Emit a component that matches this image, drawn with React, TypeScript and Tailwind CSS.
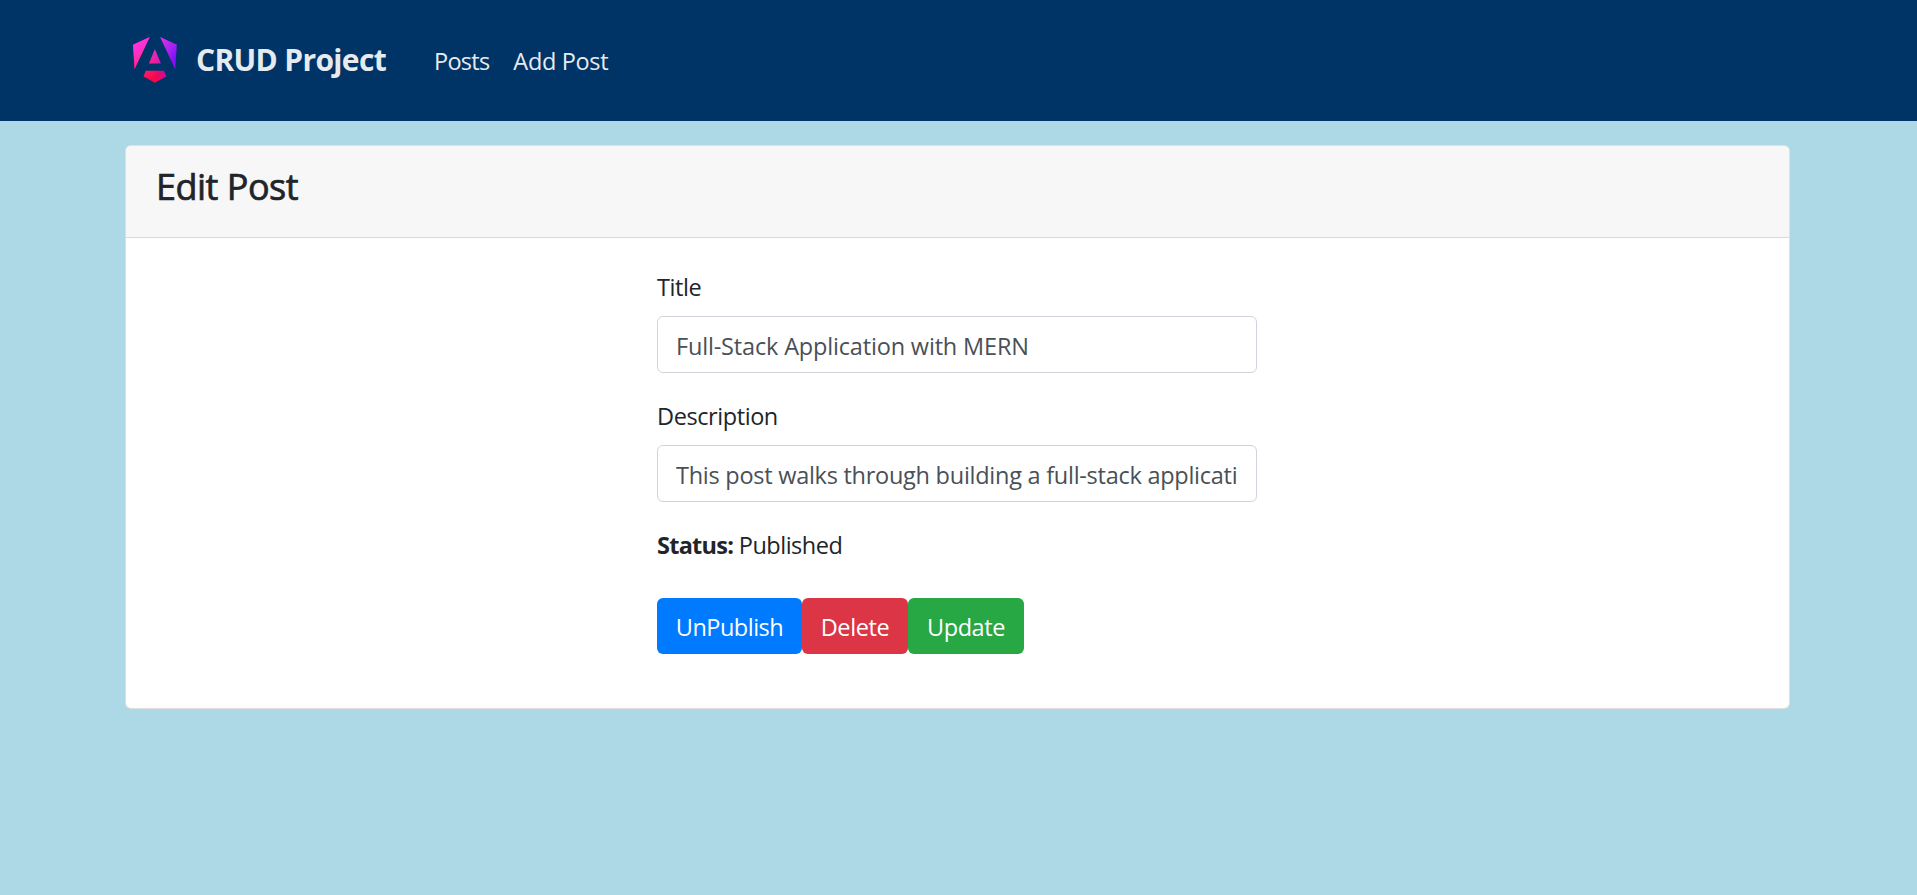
import type { ReactNode } from "react";

function Logo() {
  return (
    <svg className="mb-px h-[46px] w-11 shrink-0" viewBox="0 0 223 236" preserveAspectRatio="none" aria-hidden="true">
      <defs>
        <linearGradient id="warm" x1="49.009" y1="213.75" x2="225.06" y2="129.722" gradientUnits="userSpaceOnUse">
          <stop offset="0" stopColor="#FF0032" />
          <stop offset=".24" stopColor="#F60A48" />
          <stop offset=".352" stopColor="#F20755" />
          <stop offset=".494" stopColor="#DC087D" />
          <stop offset=".745" stopColor="#9717E7" />
          <stop offset="1" stopColor="#7F0CFA" />
        </linearGradient>
        <linearGradient id="cool" x1="41" y1="28" x2="156.741" y2="160" gradientUnits="userSpaceOnUse">
          <stop offset="0" stopColor="#FF31D9" />
          <stop offset="1" stopColor="#FF5BE1" stopOpacity="0" />
        </linearGradient>
      </defs>
      {["url(#warm)", "url(#cool)"].map((fill) => (
        <path
          key={fill}
          fill={fill}
          d="m222.077 39.192-8.019 125.923L137.387 0l84.69 39.192Zm-53.105 162.825-57.933 33.056-57.934-33.056 11.783-28.556h92.301l11.783 28.556ZM111.039 62.675l30.357 73.803H80.681l30.358-73.803ZM7.937 165.115 0 39.192 84.69 0 7.937 165.115Z"
        />
      ))}
    </svg>
  );
}

function Field({ label, id, value, labelClass, inputClass }: { label: string; id: string; value: string; labelClass: string; inputClass: string }) {
  return (
    <div className="flex flex-col gap-[11px]">
      <label htmlFor={id} className={`leading-9 ${labelClass}`}>
        {label}
      </label>
      <input
        id={id}
        defaultValue={value}
        className={`h-[57px] w-full rounded-md border border-[#ced4da] bg-white px-[18px] pt-[3px] text-[#495057] outline-none ${inputClass}`}
      />
    </div>
  );
}

function Button({ className, children }: { className: string; children: ReactNode }) {
  return <button className={`h-14 rounded-md pt-1 text-center text-white ${className}`}>{children}</button>;
}

export default function App() {
  return (
    <div className="min-h-screen bg-[#add8e6] font-['Open_Sans',sans-serif] text-[23.5px] text-[#212529]">
      <nav className="flex h-[121px] items-center bg-[#003366] pl-[133px] text-[#e6ebf0]">
        <a href="#" className="flex items-center gap-[19px]">
          <Logo />
          <span className="pb-px text-[30px] leading-none font-bold tracking-[-0.66px]">CRUD Project</span>
        </a>
        <a href="#" className="ml-12 pt-0.5 tracking-[-0.75px]">Posts</a>
        <a href="#" className="ml-6 pt-0.5 tracking-[-0.33px]">Add Post</a>
      </nav>

      <main className="ml-[125px] flex h-[588px] w-[1665px] flex-col pt-6">
        <section className="flex flex-1 flex-col overflow-hidden rounded-md border border-black/[.125] bg-white bg-clip-border">
          <header className="h-[92px] border-b border-black/[.125] bg-[#f7f7f7] pt-[19px] pl-[30px]">
            <h2 className="text-4xl leading-[43px] font-normal tracking-[-0.5px] [-webkit-text-stroke:0.7px_#212529]">Edit Post</h2>
          </header>
          <form className="ml-[531px] flex w-[600px] flex-col pt-[31px]">
            <Field id="title" label="Title" value="Full-Stack Application with MERN" labelClass="tracking-[-0.4px]" inputClass="tracking-[-0.17px]" />
            <div className="h-[25px]" />
            <Field
              id="description"
              label="Description"
              value="This post walks through building a full-stack application with the MERN stack."
              labelClass="tracking-[-0.42px]"
              inputClass="tracking-[-0.26px]"
            />
            <p className="mt-[25px] leading-9 tracking-[-0.49px]">
              <strong className="tracking-[-0.75px]">Status:</strong> Published
            </p>
            <div className="mt-[35px] flex">
              <Button className="w-[145px] bg-[#007bff] tracking-[-0.5px]">UnPublish</Button>
              <Button className="w-[106px] bg-[#dc3545] tracking-[-0.4px]">Delete</Button>
              <Button className="w-[116px] bg-[#28a745] tracking-[-0.4px]">Update</Button>
            </div>
          </form>
        </section>
      </main>
    </div>
  );
}
